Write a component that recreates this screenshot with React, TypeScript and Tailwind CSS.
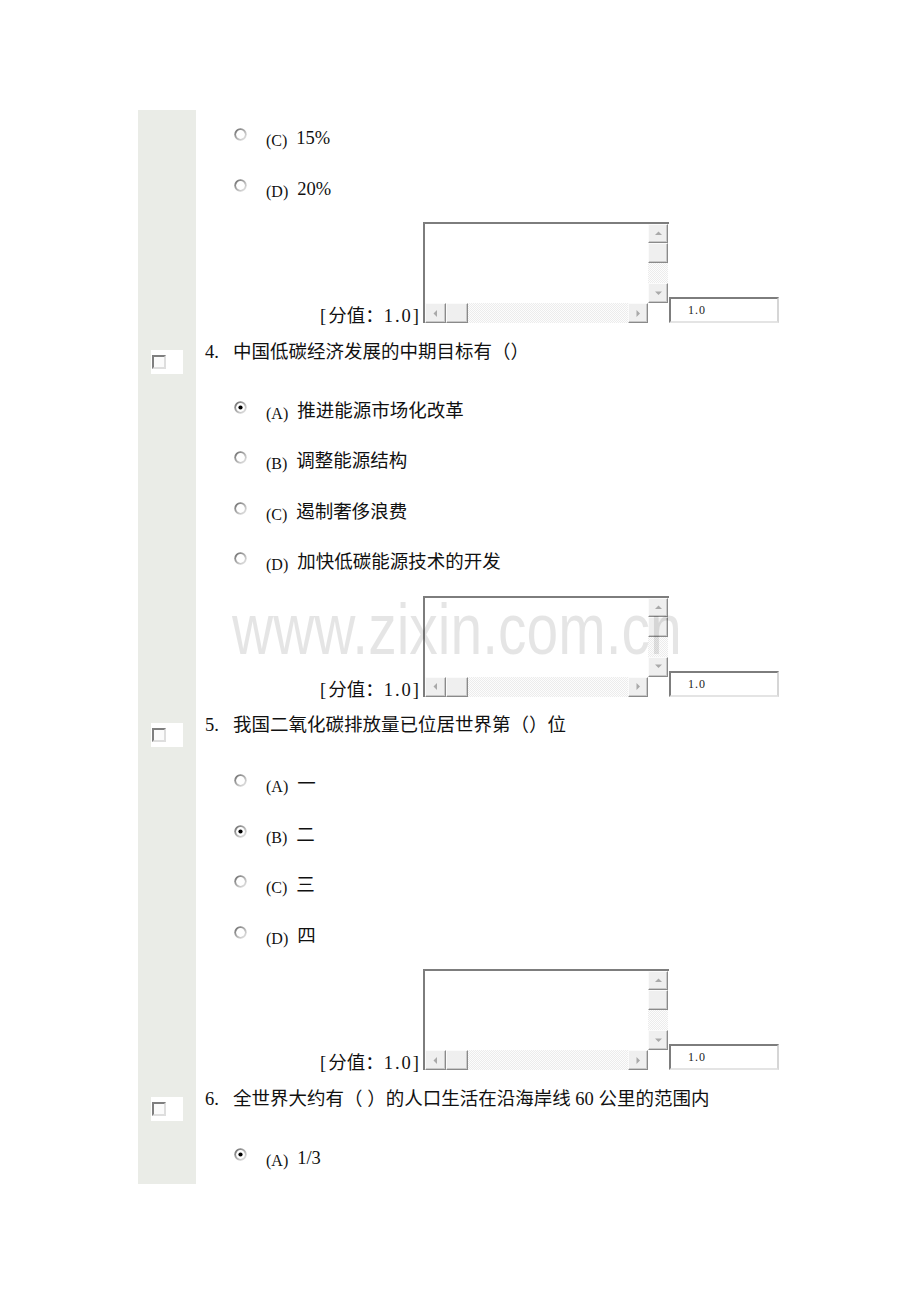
import React from "react";

const GRAY = "bg-[#eaece7]";
const TXT = "font-['Liberation_Serif','Noto_Sans_CJK_SC',serif] text-[18.5px] leading-[20px] text-[#111]";

function Row({ h, children, side }: { h: string; children?: React.ReactNode; side?: React.ReactNode }) {
  return (
    <div className={`flex ${h}`}>
      <div className={`w-[58px] shrink-0 ${GRAY}`}>{side}</div>
      <div className="flex-1">{children}</div>
    </div>
  );
}

function Radio({ checked }: { checked?: boolean }) {
  return (
    <svg width="13" height="13" viewBox="0 0 13 13" className="shrink-0 mt-[18px]">
      <defs>
        <linearGradient id="radioRing" x1="0" y1="0" x2="1" y2="1">
          <stop offset="0" stopColor="#5e5e5e" />
          <stop offset="0.5" stopColor="#b0b0b0" />
          <stop offset="1" stopColor="#f2f2f2" />
        </linearGradient>
      </defs>
      <circle cx="6.5" cy="6.5" r="6.2" fill="url(#radioRing)" />
      <circle cx="6.5" cy="6.5" r="4.4" fill="#fff" />
      {checked && <circle cx="6.5" cy="6.5" r="2.1" fill="#000" />}
    </svg>
  );
}

function Option({ letter, text, checked }: { letter: string; text: string; checked?: boolean }) {
  return (
    <Row h="h-[50.5px]">
      <div className="flex items-start pl-[38px]">
        <Radio checked={checked} />
        <span className="ml-[19px] mt-[21px] font-['Liberation_Serif',serif] text-[16px] leading-[20px] text-[#111]">
          ({letter})
        </span>
        <span className={`ml-[9px] mt-[18px] ${TXT}`}>{text}</span>
      </div>
    </Row>
  );
}

function Arrow({ dir }: { dir: "up" | "down" | "left" | "right" }) {
  const pts = {
    up: "1,5 4.5,1.5 8,5",
    down: "1,1.5 4.5,5 8,1.5",
    left: "5,1 1.5,4.5 5,8",
    right: "1.5,1 5,4.5 1.5,8",
  }[dir];
  const vert = dir === "up" || dir === "down";
  return (
    <svg width={vert ? 9 : 6.5} height={vert ? 6.5 : 9} viewBox={vert ? "0 0 9 6.5" : "0 0 6.5 9"}>
      <polygon points={pts} fill="#a9a9a9" />
    </svg>
  );
}

function SBtn({ className, children }: { className: string; children?: React.ReactNode }) {
  return (
    <div
      className={`${className} flex items-center justify-center bg-[#efefef] border border-t-[#fbfbfb] border-l-[#fbfbfb] border-r-[#8a8a8a] border-b-[#8a8a8a] shadow-[inset_-1px_-1px_0_#c9c9c9]`}
    >
      {children}
    </div>
  );
}

const TRACK = "bg-[repeating-conic-gradient(#ececec_0%_25%,#fdfdfd_0%_50%)] bg-[length:2px_2px]";

function Answer() {
  return (
    <Row h="h-[121.5px]">
      <div className="flex items-end pt-[11px] pl-[124px]">
        <span className={`${TXT} text-[#8a8a8a] mb-[-3px] w-[101px] whitespace-nowrap`}>
          <span className="tracking-[2px]">[</span>分值：<span className="tracking-[2px]">1.0]</span>
        </span>
        <div className="ml-[2px] w-[246px] h-[101px] border-t-2 border-l-2 border-[#7d7d7d] bg-white flex flex-col">
          <div className="flex flex-1">
            <div className="flex-1" />
            <div className="w-[21px] flex flex-col">
              <SBtn className="h-[19px] w-[20px]">
                <Arrow dir="up" />
              </SBtn>
              <SBtn className="h-[20px] w-[20px]" />
              <div className={`flex-1 w-[20px] ${TRACK}`} />
              <SBtn className="h-[20px] w-[20px]">
                <Arrow dir="down" />
              </SBtn>
            </div>
          </div>
          <div className="h-[20px] flex">
            <SBtn className="w-[21px] h-[20px]">
              <Arrow dir="left" />
            </SBtn>
            <SBtn className="w-[22px] h-[20px]" />
            <div className={`flex-1 h-[20px] ${TRACK}`} />
            <SBtn className="w-[20px] h-[20px]">
              <Arrow dir="right" />
            </SBtn>
            <div className="w-[21px] bg-white" />
          </div>
        </div>
        <div className="w-[110px] h-[26px] border-2 border-t-[#7d7d7d] border-l-[#7d7d7d] border-r-[#d6d6d6] border-b-[#e4e4e4] bg-white flex items-center pl-[17px]">
          <span className="font-['Liberation_Serif',serif] text-[12px] tracking-[1px] text-[#222]">1.0</span>
        </div>
      </div>
    </Row>
  );
}

function Question({ num, text }: { num: string; text: string }) {
  return (
    <Row
      h="h-[50px]"
      side={
        <div className="ml-[13px] mt-[17px] w-[32px] h-[24px] bg-white pl-[1px] pt-[5px]">
          <div className="w-[14px] h-[14px] border-2 border-t-[#7f7f7f] border-l-[#7f7f7f] border-r-[#dedede] border-b-[#dedede] bg-[#fbfbfb]" />
        </div>
      }
    >
      <div className={`pl-[9px] pt-[9px] ${TXT} whitespace-nowrap`}>
        <span className="inline-block w-[28px]">{num}.</span>
        {text}
      </div>
    </Row>
  );
}

export default function App() {
  return (
    <div className="relative w-[920px] h-[1302px] bg-white overflow-hidden">
      <div className="pt-[110px] pl-[138px] w-[800px]">
        <Option letter="C" text="15%" />
        <Option letter="D" text="20%" />
        <Answer />

        <Question num="4" text="中国低碳经济发展的中期目标有（）" />
        <Option letter="A" text="推进能源市场化改革" checked />
        <Option letter="B" text="调整能源结构" />
        <Option letter="C" text="遏制奢侈浪费" />
        <Option letter="D" text="加快低碳能源技术的开发" />
        <Answer />

        <Question num="5" text="我国二氧化碳排放量已位居世界第（）位" />
        <Option letter="A" text="一" />
        <Option letter="B" text="二" checked />
        <Option letter="C" text="三" />
        <Option letter="D" text="四" />
        <Answer />

        <Question num="6" text="全世界大约有（ ）的人口生活在沿海岸线 60 公里的范围内" />
        <Option letter="A" text="1/3" checked />
        <Row h="h-[4px]" />
      </div>

      {/* watermark */}
      <div className="absolute left-[232px] top-[593px] pointer-events-none origin-top scale-y-[1.28] font-['Liberation_Sans',sans-serif] text-[57px] leading-[57px] text-[rgba(0,0,0,0.1)] whitespace-nowrap">
        www.zixin.com.cn
      </div>
    </div>
  );
}
